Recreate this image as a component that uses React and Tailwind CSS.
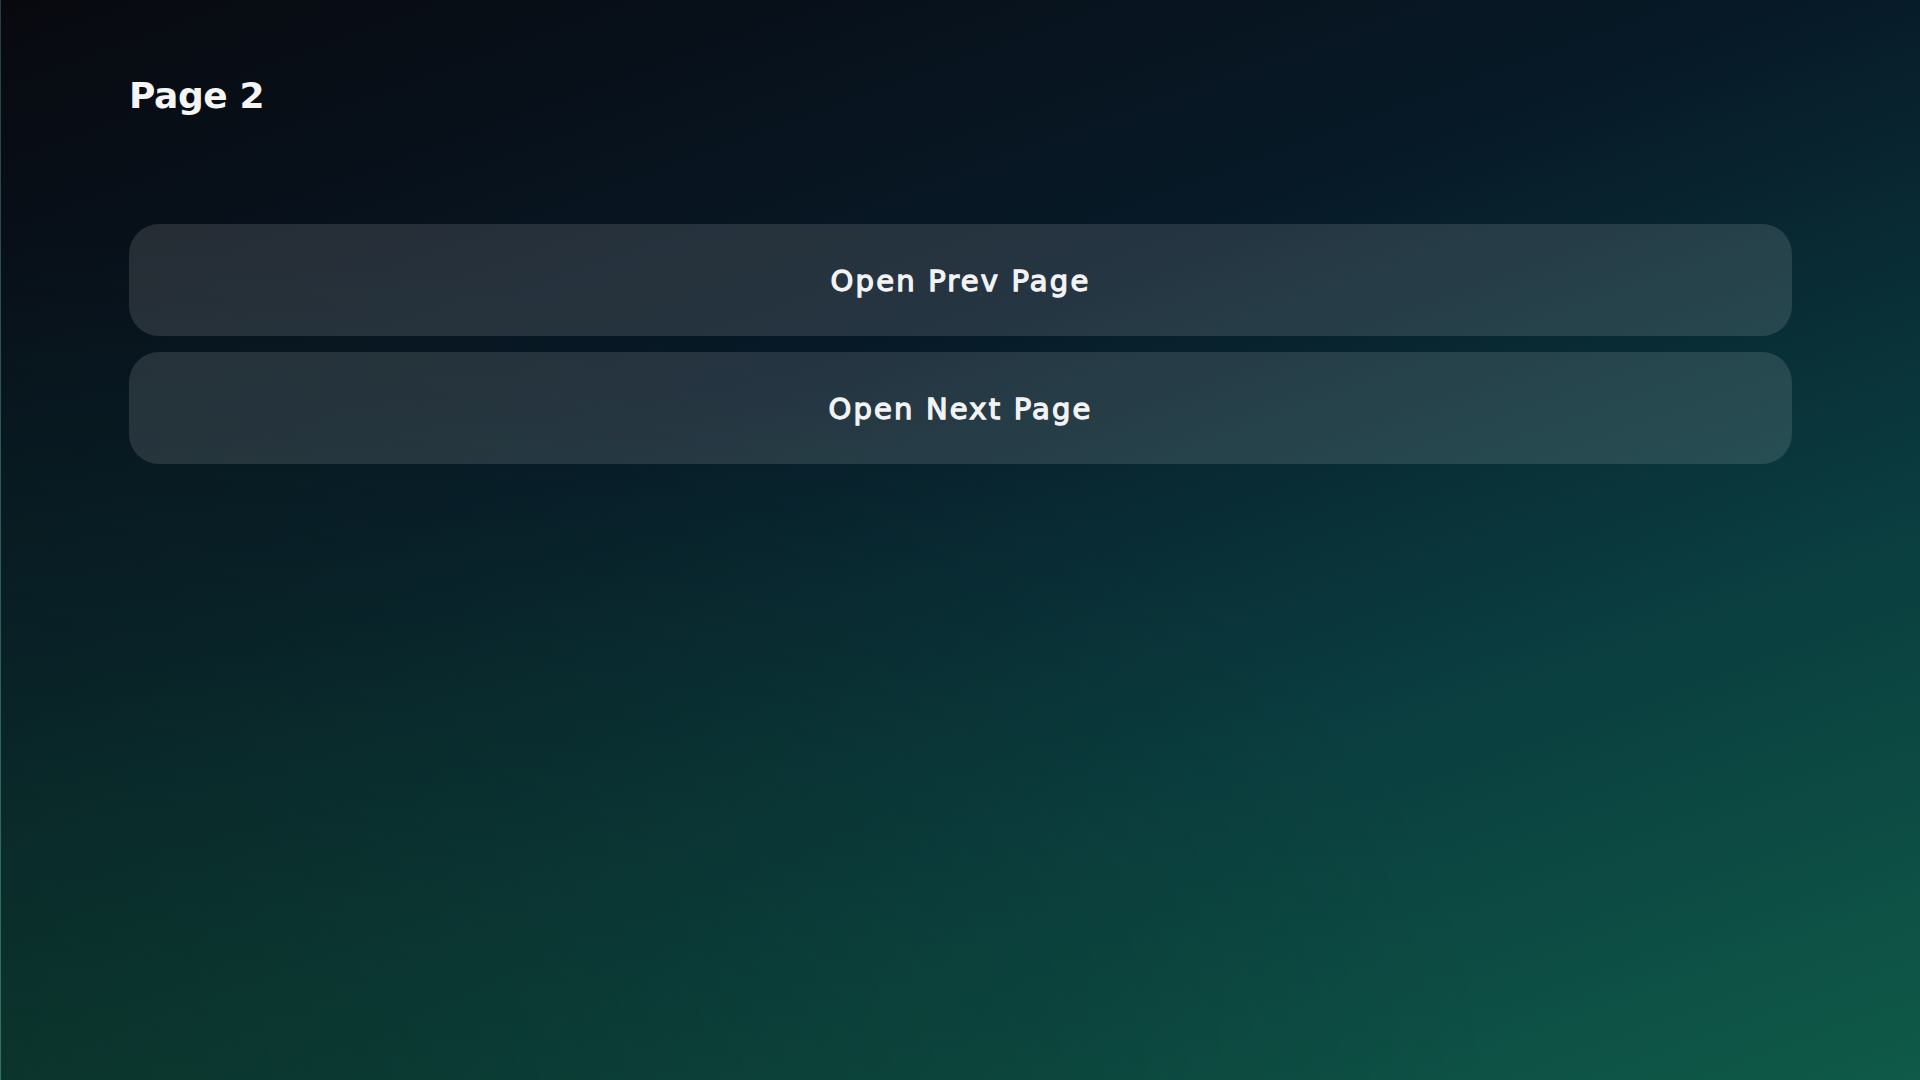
import { useState } from "react";

// Navigation button
const NavButton = ({ label, onClick }) => {
  return (
    <button
      onClick={onClick}
      className="w-full h-[112px] pt-[3px] rounded-[30px] bg-white/[0.12] text-[29px] font-normal tracking-[0.075em] text-[#f2f3f4] [-webkit-text-stroke:1.3px_#f2f3f4] flex items-center justify-center"
    >
      {label}
    </button>
  );
};

function App() {
  const [page, setPage] = useState(2);

  return (
    <div className="min-h-screen border-l border-white/15 px-32 pt-[76px] font-['DejaVu_Sans','Noto_Sans',sans-serif] bg-[radial-gradient(ellipse_at_0%_100%,rgba(12,52,32,0.55),transparent_55%),linear-gradient(160deg,#08090f_0%,#071a28_38%,#092e36_55%,#0a3d3f_68%,#0f5a48_100%)]">
      <h1 className="text-4xl leading-10 font-bold tracking-[-0.4px] text-[#f5f5f6]">
        Page {page}
      </h1>

      <div className="mt-[108px] flex flex-col gap-4">
        <NavButton
          label="Open Prev Page"
          onClick={() => setPage((p) => Math.max(1, p - 1))}
        />
        <NavButton label="Open Next Page" onClick={() => setPage((p) => p + 1)} />
      </div>
    </div>
  );
}

export default App;
